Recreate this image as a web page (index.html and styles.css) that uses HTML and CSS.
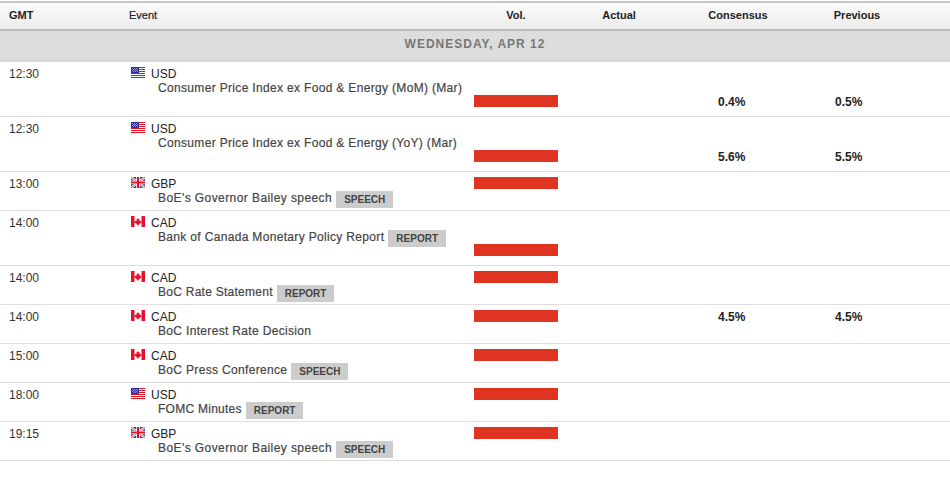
FILE: index.html
```html
<!DOCTYPE html>
<html lang="en">
<head>
<meta charset="utf-8">
<title>Economic Calendar</title>
<link rel="stylesheet" href="styles.css">
</head>
<body>
<svg class="defs" width="0" height="0" aria-hidden="true">
  <defs>
    <symbol id="us" viewBox="0 0 14 11">
      <rect width="14" height="11" fill="#fff"/>
      <path d="M0 .5h14M0 2.500h14M0 4.500h14M0 6.500h14M0 8.500h14M0 10.500h14" stroke="#e0101c" stroke-width="1"/>
      <rect width="8" height="6" fill="#2f2f9a"/>
      <path d="M1 1.500h1M3 1.500h1M5 1.500h1M2 2.500h1M4 2.500h1M6 2.500h1M1 3.500h1M3 3.500h1M5 3.500h1M2 4.500h1M4 4.500h1M6 4.500h1" stroke="#8f8fd8" stroke-width="1"/>
    </symbol>
    <symbol id="gb" viewBox="0 0 14 11">
      <rect width="14" height="11" fill="#2b3a96"/>
      <path d="M0 0l14 11M14 0L0 11" stroke="#fff" stroke-width="2.2"/>
      <path d="M0 0l14 11M14 0L0 11" stroke="#e0202c" stroke-width=".8"/>
      <path d="M7 0v11M0 5.500h14" stroke="#fff" stroke-width="3.600"/>
      <path d="M7 0v11M0 5.500h14" stroke="#e0101c" stroke-width="2"/>
    </symbol>
    <symbol id="ca" viewBox="0 0 14 11">
      <rect width="14" height="11" fill="#fff"/>
      <rect width="3.500" height="11" fill="#e8102c"/>
      <rect x="10.500" width="3.500" height="11" fill="#e8102c"/>
      <path d="M7 2l.8 1.300.8-.3-.3 2 1-.6.3.8 1-.2-.4 1.300.4.3L8.300 8l.1.800H7.300V10H6.700V8.800H5.600L5.700 8 3.400 6.600l.4-.3-.4-1.300 1 .2.300-.8 1 .6-.3-2 .8.300z" fill="#e8102c"/>
    </symbol>
  </defs>
</svg>
<main class="calendar">
  <header class="row head">
    <div class="c-time">GMT</div>
    <div class="c-event">Event</div>
    <div class="c-vol">Vol.</div>
    <div class="c-head">Actual</div>
    <div class="c-head">Consensus</div>
    <div class="c-head">Previous</div>
  </header>
  <div class="date">WEDNESDAY, APR 12</div>

  <div class="row entry tall">
    <div class="c-time">12:30</div>
    <div class="c-event">
      <div class="cur"><svg class="flag"><use href="#us"/></svg>USD</div>
      <div class="name"><span>Consumer Price Index ex Food &amp; Energy (MoM) (Mar)</span></div>
    </div>
    <div class="bar"></div>
    <div class="val"></div>
    <div class="val">0.4%</div>
    <div class="val prev">0.5%</div>
  </div>

  <div class="row entry tall">
    <div class="c-time">12:30</div>
    <div class="c-event">
      <div class="cur"><svg class="flag"><use href="#us"/></svg>USD</div>
      <div class="name"><span>Consumer Price Index ex Food &amp; Energy (YoY) (Mar)</span></div>
    </div>
    <div class="bar"></div>
    <div class="val"></div>
    <div class="val">5.6%</div>
    <div class="val prev">5.5%</div>
  </div>

  <div class="row entry">
    <div class="c-time">13:00</div>
    <div class="c-event">
      <div class="cur"><svg class="flag"><use href="#gb"/></svg>GBP</div>
      <div class="name"><span class="wide">BoE's Governor Bailey speech</span><b class="tag">SPEECH</b></div>
    </div>
    <div class="bar"></div>
    <div class="val"></div><div class="val"></div><div class="val"></div>
  </div>

  <div class="row entry tall">
    <div class="c-time">14:00</div>
    <div class="c-event">
      <div class="cur"><svg class="flag"><use href="#ca"/></svg>CAD</div>
      <div class="name"><span>Bank of Canada Monetary Policy Report</span><b class="tag">REPORT</b></div>
    </div>
    <div class="bar"></div>
    <div class="val"></div><div class="val"></div><div class="val"></div>
  </div>

  <div class="row entry">
    <div class="c-time">14:00</div>
    <div class="c-event">
      <div class="cur"><svg class="flag"><use href="#ca"/></svg>CAD</div>
      <div class="name"><span class="tight">BoC Rate Statement</span><b class="tag">REPORT</b></div>
    </div>
    <div class="bar"></div>
    <div class="val"></div><div class="val"></div><div class="val"></div>
  </div>

  <div class="row entry">
    <div class="c-time">14:00</div>
    <div class="c-event">
      <div class="cur"><svg class="flag"><use href="#ca"/></svg>CAD</div>
      <div class="name"><span>BoC Interest Rate Decision</span></div>
    </div>
    <div class="bar"></div>
    <div class="val"></div>
    <div class="val">4.5%</div>
    <div class="val prev">4.5%</div>
  </div>

  <div class="row entry">
    <div class="c-time">15:00</div>
    <div class="c-event">
      <div class="cur"><svg class="flag"><use href="#ca"/></svg>CAD</div>
      <div class="name"><span>BoC Press Conference</span><b class="tag">SPEECH</b></div>
    </div>
    <div class="bar"></div>
    <div class="val"></div><div class="val"></div><div class="val"></div>
  </div>

  <div class="row entry">
    <div class="c-time">18:00</div>
    <div class="c-event">
      <div class="cur"><svg class="flag"><use href="#us"/></svg>USD</div>
      <div class="name"><span class="tight">FOMC Minutes</span><b class="tag">REPORT</b></div>
    </div>
    <div class="bar"></div>
    <div class="val"></div><div class="val"></div><div class="val"></div>
  </div>

  <div class="row entry">
    <div class="c-time">19:15</div>
    <div class="c-event">
      <div class="cur"><svg class="flag"><use href="#gb"/></svg>GBP</div>
      <div class="name"><span class="wide">BoE's Governor Bailey speech</span><b class="tag">SPEECH</b></div>
    </div>
    <div class="bar"></div>
    <div class="val"></div><div class="val"></div><div class="val"></div>
  </div>
</main>
</body>
</html>
```
FILE: styles.css
```css
* { box-sizing: border-box; }
html, body { margin: 0; padding: 0; background: #fff; }
body {
  font-family: "Liberation Sans", Arial, sans-serif;
  font-size: 12px;
  color: #222;
  height: 477px;
  overflow: hidden;
}
.defs { position: absolute; }
.calendar { padding-top: 1px; }
.row {
  display: grid;
  grid-template-columns: 129px 345px 84px 122px 116px 122px 32px;
}
.head {
  height: 30px;
  border-top: 2px solid #c6c6c6;
  border-bottom: 2px solid #bbb;
  background: linear-gradient(#fbfbfb, #ececec);
  font-size: 11px;
  font-weight: bold;
  color: #222;
  align-items: center;
  padding-bottom: 3px;
}
.head .c-time { padding-left: 9px; }
.head .c-event { font-weight: normal; -webkit-text-stroke: .2px #222; }
.c-vol, .c-head { text-align: center; }
.date {
  height: 31px;
  background: #ddd;
  border-bottom: 3px solid #d8d8d8;
  color: #777;
  font-size: 12px;
  font-weight: bold;
  letter-spacing: 1px;
  text-align: center;
  line-height: 26px;
}
.entry {
  height: 39px;
  border-bottom: 1px solid #ddd;
  padding-top: 5px;
  line-height: 14px;
}
.tall { height: 55px; }
.entry .c-time { padding-left: 9px; color: #333; }
.cur { display: flex; align-items: center; height: 14px; padding-left: 2px; color: #222; }
.flag { width: 14px; height: 11px; margin-right: 6px; margin-top: -3px; flex: none; }
.name {
  display: flex;
  align-items: center;
  height: 14px;
  padding-left: 29px;
  color: #444;
  white-space: nowrap;
}
.name span { letter-spacing: .33px; -webkit-text-stroke: .2px #444; }
.name .wide { letter-spacing: .42px; }
.name .tight { letter-spacing: .26px; }
.tag {
  display: inline-block;
  height: 17px;
  line-height: 17px;
  margin: 3px 0 0 4px;
  padding: 0 8px;
  background: #ccc;
  color: #444;
  font-size: 10px;
  font-weight: bold;
}
.bar { height: 12px; background: #e03423; }
.tall .bar { margin-top: 28px; }
.val { padding-left: 38px; font-weight: bold; color: #222; }
.val.prev { padding-left: 39px; }
.tall .val { padding-top: 28px; }
```
